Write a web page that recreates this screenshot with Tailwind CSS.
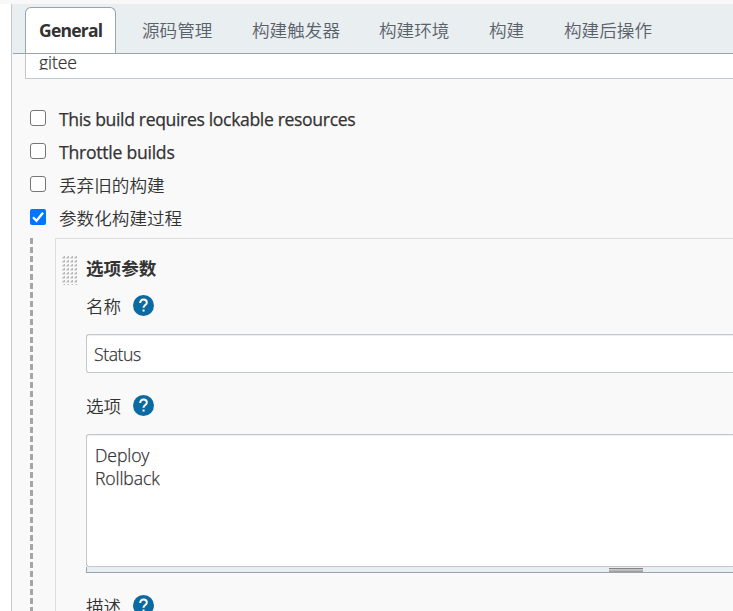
<!DOCTYPE html>
<html lang="zh-CN">
<head>
<meta charset="utf-8">
<title>General</title>
<script src="https://cdn.jsdelivr.net/npm/@tailwindcss/browser@4"></script>
</head>
<body class="flex h-[611px] w-[733px] flex-col overflow-hidden bg-white font-['Open_Sans','Noto_Sans_CJK_SC',sans-serif] text-[17.6px] leading-[24px] text-[#333] font-[350]">
<div class="h-1 shrink-0 bg-[#f8f8f8]"></div>
<main class="ml-[11px] flex min-h-0 flex-1 flex-col border-l border-[#c4c8ca] bg-[#f9f9f9]">
  <nav class="h-[50px] shrink-0 bg-[#e9eef1] pl-px">
    <div class="flex h-[50px] border-b border-[#98a5af] pl-3 pt-[3px] text-[#5a616a] whitespace-nowrap">
      <div class="h-[46px] w-[91px] rounded-t-[6px] border border-b-0 border-[#98a5af] bg-white pl-[13px] pt-[10px] font-bold text-[#333]"><span class="block w-16 text-[17.5px] tracking-[-0.75px]">General</span></div>
      <div class="ml-[26px] w-[71px] pt-[11px]">源码管理</div>
      <div class="ml-[39px] w-[88px] pt-[11px]">构建触发器</div>
      <div class="ml-[39px] w-[71px] pt-[11px]">构建环境</div>
      <div class="ml-[39px] w-[36px] pt-[11px]">构建</div>
      <div class="ml-[39px] w-[90px] pt-[11px]">构建后操作</div>
    </div>
  </nav>
  <div class="ml-[13px] h-[25px] shrink-0 overflow-hidden border-b border-l border-[#c3c8cc] bg-white pl-[13px]">
    <div class="h-[16px] overflow-hidden"><div class="-mt-[4px] tracking-[-0.1px] [-webkit-text-stroke:0.25px_#333]">gitee</div></div>
  </div>
  <div class="mt-[23px] ml-[18px] shrink-0 whitespace-nowrap">
    <label class="flex h-[33px]"><span class="mt-2 size-4 rounded-[3px] border border-[#767676] bg-white"></span><span class="ml-[13px] mt-[5px] font-medium tracking-[-0.35px] [-webkit-text-stroke:0.25px_#333]">This build requires lockable resources</span></label>
    <label class="flex h-[33px]"><span class="mt-2 size-4 rounded-[3px] border border-[#767676] bg-white"></span><span class="ml-[13px] mt-[5px] font-medium tracking-[-0.25px] [-webkit-text-stroke:0.25px_#333]">Throttle builds</span></label>
    <label class="flex h-[33px]"><span class="mt-2 size-4 rounded-[3px] border border-[#767676] bg-white"></span><span class="ml-[13px] mt-[5px]">丢弃旧的构建</span></label>
    <label class="flex h-[33px]"><span class="mt-2 size-4 rounded-[2px] bg-[#0075ff]"><svg viewBox="0 0 16 16" class="size-4" fill="none" stroke="#fff" stroke-width="2.3"><path d="M3 8.2 6.5 11.7 13 3.7"/></svg></span><span class="ml-[13px] mt-[5px]">参数化构建过程</span></label>
  </div>
  <section class="mt-[4px] ml-[18px] flex min-h-0 flex-1">
    <div class="w-[3px] shrink-0 bg-[repeating-linear-gradient(to_bottom,#a6a6a6_0px,#a6a6a6_6px,#f9f9f9_6px,#f9f9f9_9px)]"></div>
    <div class="ml-[22px] flex min-w-0 flex-1 border-l border-t border-[#ddd]">
      <svg class="ml-[6px] mt-[17px] h-[29px] w-[15px] shrink-0" viewBox="0 0 15 29"><defs><pattern id="grip" width="4" height="4" patternUnits="userSpaceOnUse"><path d="M0 1h3v2H0zM1 0h2v1H1z" fill="#e0e0e0"/><path d="M2 0h1v2H2zM1 1h1v1H1z" fill="#b8b8b8"/></pattern></defs><rect width="15" height="29" fill="url(#grip)"/></svg>
      <div class="ml-[9px] min-w-0 flex-1 pt-[17px]">
        <h2 class="h-[38px] font-bold">选项参数</h2>
        <div class="flex h-[40px]"><span class="w-[47px]">名称</span><svg class="mt-px size-[21px]" viewBox="0 0 24 24"><circle cx="12" cy="12" r="12" fill="#0b6aa2"/><path d="M8.2 9.1C8.2 6.9 9.9 5.2 12 5.2s3.8 1.5 3.8 3.6c0 2.5-3.8 3-3.8 5.8" fill="none" stroke="#fff" stroke-width="2.3"/><path d="M10.9 16.6h2.3v2.3h-2.3z" fill="#fff"/></svg></div>
        <div class="h-[39px] rounded-l-[3px] border border-r-0 border-[#c3c8cc] bg-white pl-[7px] pt-[7px] tracking-[-0.4px] shadow-[inset_0_1px_1px_#eee] [-webkit-text-stroke:0.25px_#333]">Status</div>
        <div class="flex h-[61px] pt-[21px]"><span class="w-[47px]">选项</span><svg class="mt-px size-[21px]" viewBox="0 0 24 24"><circle cx="12" cy="12" r="12" fill="#0b6aa2"/><path d="M8.2 9.1C8.2 6.9 9.9 5.2 12 5.2s3.8 1.5 3.8 3.6c0 2.5-3.8 3-3.8 5.8" fill="none" stroke="#fff" stroke-width="2.3"/><path d="M10.9 16.6h2.3v2.3h-2.3z" fill="#fff"/></svg></div>
        <div class="h-[133px] rounded-l-[3px] border border-r-0 border-[#c3c8cc] bg-white pl-2 pt-[9px] leading-[23px] tracking-[-0.1px] shadow-[inset_0_1px_1px_#eee] [-webkit-text-stroke:0.25px_#333]">Deploy<br>Rollback</div>
        <div class="h-[6px] border-b border-l border-[#98a5af] bg-[#e9eef1] pl-[522px] pt-px"><div class="h-1 w-[34px] border-t border-[#858585] bg-[linear-gradient(#bcbcbc_0px,#cecece_1px,#a5a5a5_2px,#999_3px)]"></div></div>
        <div class="flex pt-[21px]"><span class="w-[47px]">描述</span><svg class="mt-px size-[21px]" viewBox="0 0 24 24"><circle cx="12" cy="12" r="12" fill="#0b6aa2"/><path d="M8.2 9.1C8.2 6.9 9.9 5.2 12 5.2s3.8 1.5 3.8 3.6c0 2.5-3.8 3-3.8 5.8" fill="none" stroke="#fff" stroke-width="2.3"/><path d="M10.9 16.6h2.3v2.3h-2.3z" fill="#fff"/></svg></div>
      </div>
    </div>
  </section>
</main>
</body>
</html>
